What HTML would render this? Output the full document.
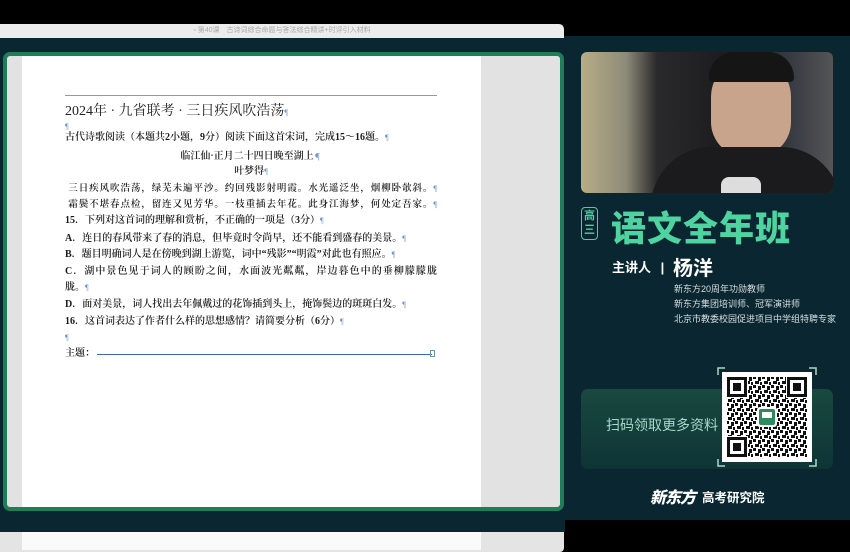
<!DOCTYPE html>
<html><head><meta charset="utf-8"><style>
*{margin:0;padding:0;box-sizing:border-box}
body{width:850px;height:552px;background:#000;position:relative;overflow:hidden;font-family:"Liberation Sans","Noto Sans CJK SC",sans-serif}
.abs{position:absolute}
.l{position:absolute;left:65px;width:372px;font-family:"Liberation Serif","Noto Serif CJK SC",serif;font-size:10px;color:#1a1a1a;white-space:nowrap;line-height:12px;font-weight:600}
.p{color:#6d93c6;font-size:8px;font-weight:normal}
.c{text-align:center}
.j{text-align:justify;text-align-last:justify}
.info{position:absolute;left:674px;font-size:9px;color:#d6dfe1;white-space:nowrap}
</style></head><body>
<div class="abs" style="left:0;top:36px;width:850px;height:484px;background:#0a2731"></div>
<div class="abs" style="left:0;top:520px;width:565px;height:12px;background:#0a2731"></div>
<div class="abs" style="left:0;top:24px;width:564px;height:14px;background:#ececec;border-radius:0 5px 0 0;font-size:7px;color:#aaa;text-align:center;line-height:14px">▫ 第40课　古诗词综合命题与答法综合精讲+时评引入材料</div>
<div class="abs" style="left:0;top:532px;width:564px;height:20px;background:#e4e4e4;border-radius:0 0 4px 0"></div>
<div class="abs" style="left:22px;top:532px;width:459px;height:18px;background:#fafafa"></div>
<div class="abs" style="left:3px;top:52px;width:561px;height:459px;border:4px solid #1f7d58;border-radius:7px;background:#e2e2e2;overflow:hidden">
  <div class="abs" style="left:15px;top:0;width:459px;height:455px;background:#fff"></div>
</div>
<div class="abs" style="left:65px;top:95px;width:372px;height:1px;background:#999"></div>
<div class="abs" style="left:65px;top:100px;font-family:'Liberation Serif','Noto Serif CJK SC',serif;font-size:14px;color:#222;white-space:nowrap">2024年 · 九省联考 · 三日疾风吹浩荡<span class="p">¶</span></div>
<div class="l" style="top:121px"><span class="p">¶</span></div>
<div class="l" style="top:132px">古代诗歌阅读（本题共2小题，9分）阅读下面这首宋词，完成15～16题。<span class="p">¶</span></div>
<div class="l c" style="top:149px;font-family:'Noto Serif CJK SC',serif">临江仙·正月二十四日晚至湖上<span class="p">¶</span></div>
<div class="l c" style="top:166px">叶梦得<span class="p">¶</span></div>
<div class="l j" style="top:183px;font-size:9.5px">&nbsp;三日疾风吹浩荡，绿芜未遍平沙。约回残影射明霞。水光遥泛坐，烟柳卧欹斜。<span class="p">¶</span></div>
<div class="l j" style="top:199px;font-size:9.5px">&nbsp;霜鬓不堪春点检，留连又见芳华。一枝重插去年花。此身江海梦，何处定吾家。<span class="p">¶</span></div>
<div class="l" style="top:215px">15．下列对这首词的理解和赏析，不正确的一项是（3分）<span class="p">¶</span></div>
<div class="l" style="top:233px">A．连日的春风带来了春的消息，但毕竟时令尚早，还不能看到盛春的美景。<span class="p">¶</span></div>
<div class="l" style="top:249px">B．题目明确词人是在傍晚到湖上游览，词中“残影”“明霞”对此也有照应。<span class="p">¶</span></div>
<div class="l j" style="top:266px">C．湖中景色见于词人的顾盼之间，水面波光粼粼，岸边暮色中的垂柳朦朦胧</div>
<div class="l" style="top:282px">胧。<span class="p">¶</span></div>
<div class="l" style="top:299px">D．面对美景，词人找出去年佩戴过的花饰插到头上，掩饰鬓边的斑斑白发。<span class="p">¶</span></div>
<div class="l" style="top:316px">16．这首词表达了作者什么样的思想感情？请简要分析（6分）<span class="p">¶</span></div>
<div class="l" style="top:332px"><span class="p">¶</span></div>
<div class="l" style="top:348px">主题：</div>
<div class="abs" style="left:97px;top:354px;width:335px;height:1px;background:#3a6ea8"></div>
<div class="abs" style="left:430px;top:350px;width:5px;height:7px;border:1px solid #6d93c6"></div>

<div class="abs" style="left:581px;top:52px;width:252px;height:141px;border-radius:6px;overflow:hidden;background:linear-gradient(90deg,#b7ad86 0%,#8d8a78 18%,#2a2a2c 30%,#1a1a1c 60%,#3a3d45 85%,#555 100%)">
  <div class="abs" style="left:130px;top:5px;width:80px;height:100px;border-radius:40px 40px 35px 35px;background:#c9a48c"></div>
  <div class="abs" style="left:128px;top:0;width:85px;height:30px;border-radius:30px 30px 5px 5px;background:#151515"></div>
  <div class="abs" style="left:70px;top:95px;width:190px;height:60px;border-radius:60px 60px 0 0;background:#1b1b1d"></div>
  <div class="abs" style="left:140px;top:125px;width:40px;height:16px;border-radius:8px 8px 0 0;background:#ddd"></div>
</div>
<div class="abs" style="left:581px;top:207px;width:17px;height:33px;border:1.5px solid #4fcf9e;border-radius:4px;color:#4fcf9e;font-size:11px;font-weight:bold;line-height:14px;text-align:center;padding-top:1px">高<br>三</div>
<div class="abs" style="left:611px;top:201px;font-size:35px;font-weight:900;color:#4fd3a0;letter-spacing:1px;white-space:nowrap">语文全年班</div>
<div class="abs" style="left:612px;top:257px;font-size:13px;font-weight:bold;color:#fff;white-space:nowrap">主讲人 <span style="margin:0 6px">|</span></div>
<div class="abs" style="left:673px;top:252px;font-size:20px;font-weight:bold;color:#fff">杨洋</div>
<div class="info" style="top:282px">新东方20周年功勋教师</div>
<div class="info" style="top:297px">新东方集团培训师、冠军演讲师</div>
<div class="info" style="top:312px">北京市教委校园促进项目中学组特聘专家</div>
<div class="abs" style="left:581px;top:389px;width:252px;height:80px;border-radius:7px;background:linear-gradient(180deg,#18493f,#0f3436)"></div>
<div class="abs" style="left:606px;top:415px;font-size:14px;color:#a9d9c8">扫码领取更多资料</div>
<svg class="abs" style="left:717px;top:367px" width="100" height="100" viewBox="0 0 100 100">
<defs><pattern id="q" width="9" height="9" patternUnits="userSpaceOnUse"><rect width="9" height="9" fill="#fff"/><rect x="0" y="0" width="3" height="3" fill="#111"/><rect x="5" y="1" width="3" height="4" fill="#111"/><rect x="2" y="5" width="4" height="3" fill="#111"/><rect x="7" y="6" width="2" height="3" fill="#111"/></pattern></defs>
<g fill="none" stroke="#a8d8c8" stroke-width="1.5"><path d="M1 8V1h7M92 1h7v7M1 92v7h7M99 92v7h-7"/></g>
<rect x="5" y="5" width="90" height="90" fill="#fff"/>
<rect x="10" y="10" width="80" height="80" fill="url(#q)"/>
<g fill="#fff"><rect x="9" y="9" width="22" height="22"/><rect x="69" y="9" width="22" height="22"/><rect x="9" y="69" width="22" height="22"/></g>
<g fill="none" stroke="#111" stroke-width="3"><rect x="11.5" y="11.5" width="17" height="17"/><rect x="71.5" y="11.5" width="17" height="17"/><rect x="11.5" y="71.5" width="17" height="17"/></g>
<g fill="#111"><rect x="16" y="16" width="8" height="8"/><rect x="76" y="16" width="8" height="8"/><rect x="16" y="76" width="8" height="8"/></g>
<rect x="40" y="40" width="20" height="20" rx="3" fill="#fff"/><rect x="42" y="42" width="16" height="16" rx="2" fill="#2f8a5e"/><rect x="45" y="45" width="10" height="6" fill="#fff"/>
</svg>
<div class="abs" style="left:650px;top:484px;font-size:16px;font-weight:900;font-style:italic;color:#fff;letter-spacing:-1px">新东方</div>
<div class="abs" style="left:702px;top:487px;font-size:12.5px;font-weight:bold;color:#fff">高考研究院</div>
</body></html>
